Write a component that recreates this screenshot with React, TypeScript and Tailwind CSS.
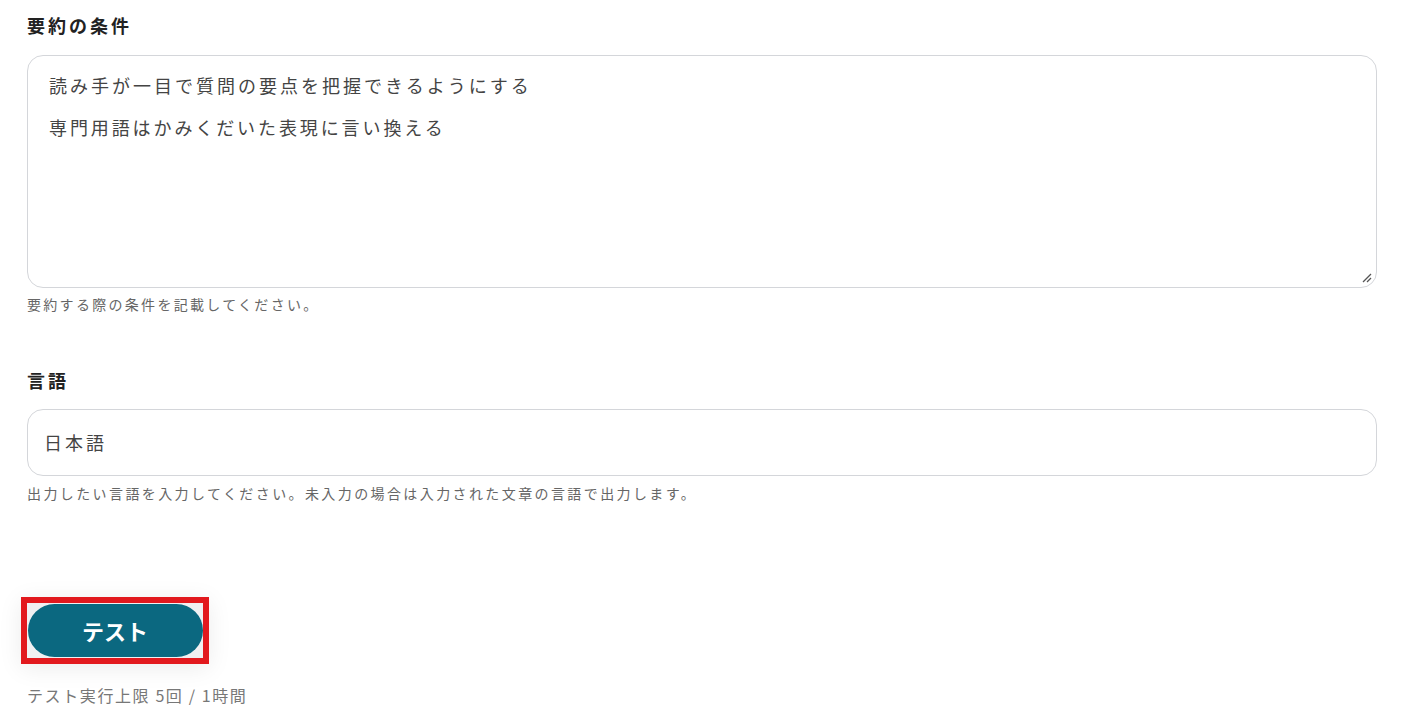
import React from "react";

const font = { fontFamily: '"Noto Sans CJK JP", "Noto Sans", sans-serif' };

export default function App() {
  return (
    <div className="w-[1411px] h-[727px] bg-white overflow-hidden text-[#333]" style={font}>
      <div className="pl-[27px] pr-[34px] pt-[11px]">
        <div className="text-[18px] font-bold leading-[28px] tracking-[3px] text-[#222]">要約の条件</div>
        <div className="mt-[16px] h-[233px] rounded-[16px] border border-[#d4d6da] relative pl-[21px] pt-[14px]">
          <p className="text-[18px] leading-[30px] tracking-[3px] text-[#444]">読み手が一目で質問の要点を把握できるようにする</p>
          <p className="text-[18px] leading-[30px] tracking-[2.9px] text-[#444] mt-[12px]">専門用語はかみくだいた表現に言い換える</p>
          <svg className="absolute right-[3px] bottom-[3px]" width="12" height="12" viewBox="0 0 12 12">
            <line x1="2" y1="10" x2="10" y2="2" stroke="#555" strokeWidth="1.3" />
            <line x1="6" y1="10" x2="10" y2="6" stroke="#555" strokeWidth="1.3" />
          </svg>
        </div>
        <div className="mt-[6px] text-[14px] leading-[20px] tracking-[2.3px] text-[#666]">要約する際の条件を記載してください。</div>

        <div className="mt-[52px] text-[18px] font-bold leading-[28px] tracking-[3px] text-[#222]">言語</div>
        <div className="mt-[15px] h-[67px] rounded-[16px] border border-[#d4d6da] flex items-center pl-[16px]">
          <span className="text-[18px] tracking-[3px] text-[#444]">日本語</span>
        </div>
        <div className="mt-[7px] text-[14px] leading-[20px] tracking-[2.4px] text-[#666]">出力したい言語を入力してください。未入力の場合は入力された文章の言語で出力します。</div>

        <div className="mt-[94px] -ml-[6px] w-[188px] h-[67px] border-[6px] border-[#e2191e] bg-[#f0f0f2] flex items-center justify-center shadow-[0_4px_24px_rgba(0,0,0,0.08)]">
          <div className="w-[175px] h-[53px] rounded-full bg-[#0b6880] text-white text-[22px] font-bold flex items-center justify-center">テスト</div>
        </div>
        <div className="mt-[19px] text-[16px] leading-[24px] tracking-[1.6px] text-[#777]">テスト実行上限 5回 / 1時間</div>
      </div>
    </div>
  );
}
